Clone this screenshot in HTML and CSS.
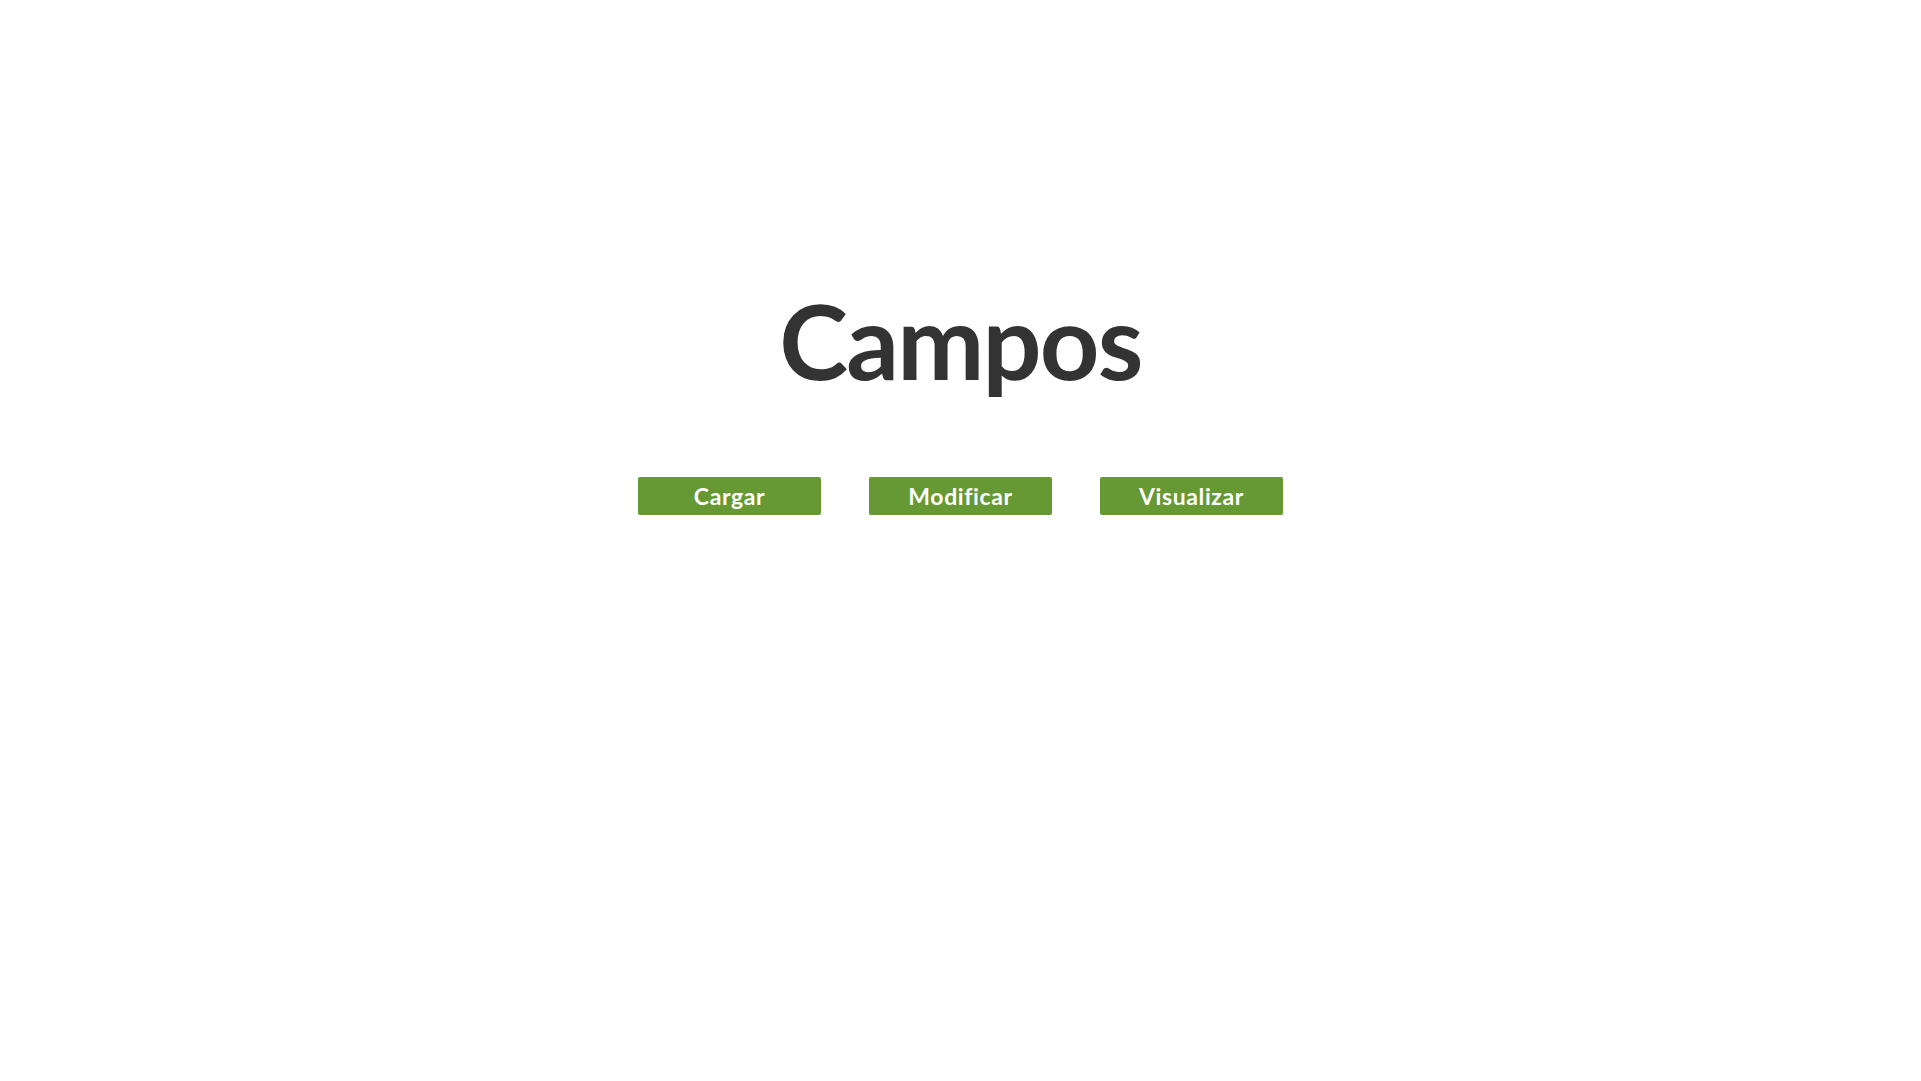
FILE: index.html
```html
<!DOCTYPE html>
<html lang="es">
<head>
<meta charset="utf-8">
<title>Campos</title>
<link rel="stylesheet" href="styles.css">
</head>
<body>
<main class="page">
  <h1 class="title">Campos</h1>
  <nav class="actions">
    <a class="btn" href="#">Cargar</a>
    <a class="btn" href="#">Modificar</a>
    <a class="btn" href="#">Visualizar</a>
  </nav>
</main>
</body>
</html>
```
FILE: styles.css
```css
html, body {
  margin: 0;
  padding: 0;
  background: #ffffff;
}
body {
  font-family: "Lato", "Open Sans", "Liberation Sans", sans-serif;
}
.page {
  display: flex;
  flex-direction: column;
  align-items: center;
  padding-top: 280px;
}
.title {
  margin: 0;
  font-size: 104px;
  line-height: 120px;
  font-weight: 700;
  letter-spacing: -1.8px;
  color: #333333;
}
.actions {
  display: flex;
  gap: 48px;
  margin-top: 77px;
}
.btn {
  display: flex;
  align-items: center;
  justify-content: center;
  width: 183px;
  height: 38px;
  background: #669933;
  border-radius: 2px;
  color: #ffffff;
  font-size: 23px;
  font-weight: 700;
  letter-spacing: 0.6px;
  text-decoration: none;
}
```
